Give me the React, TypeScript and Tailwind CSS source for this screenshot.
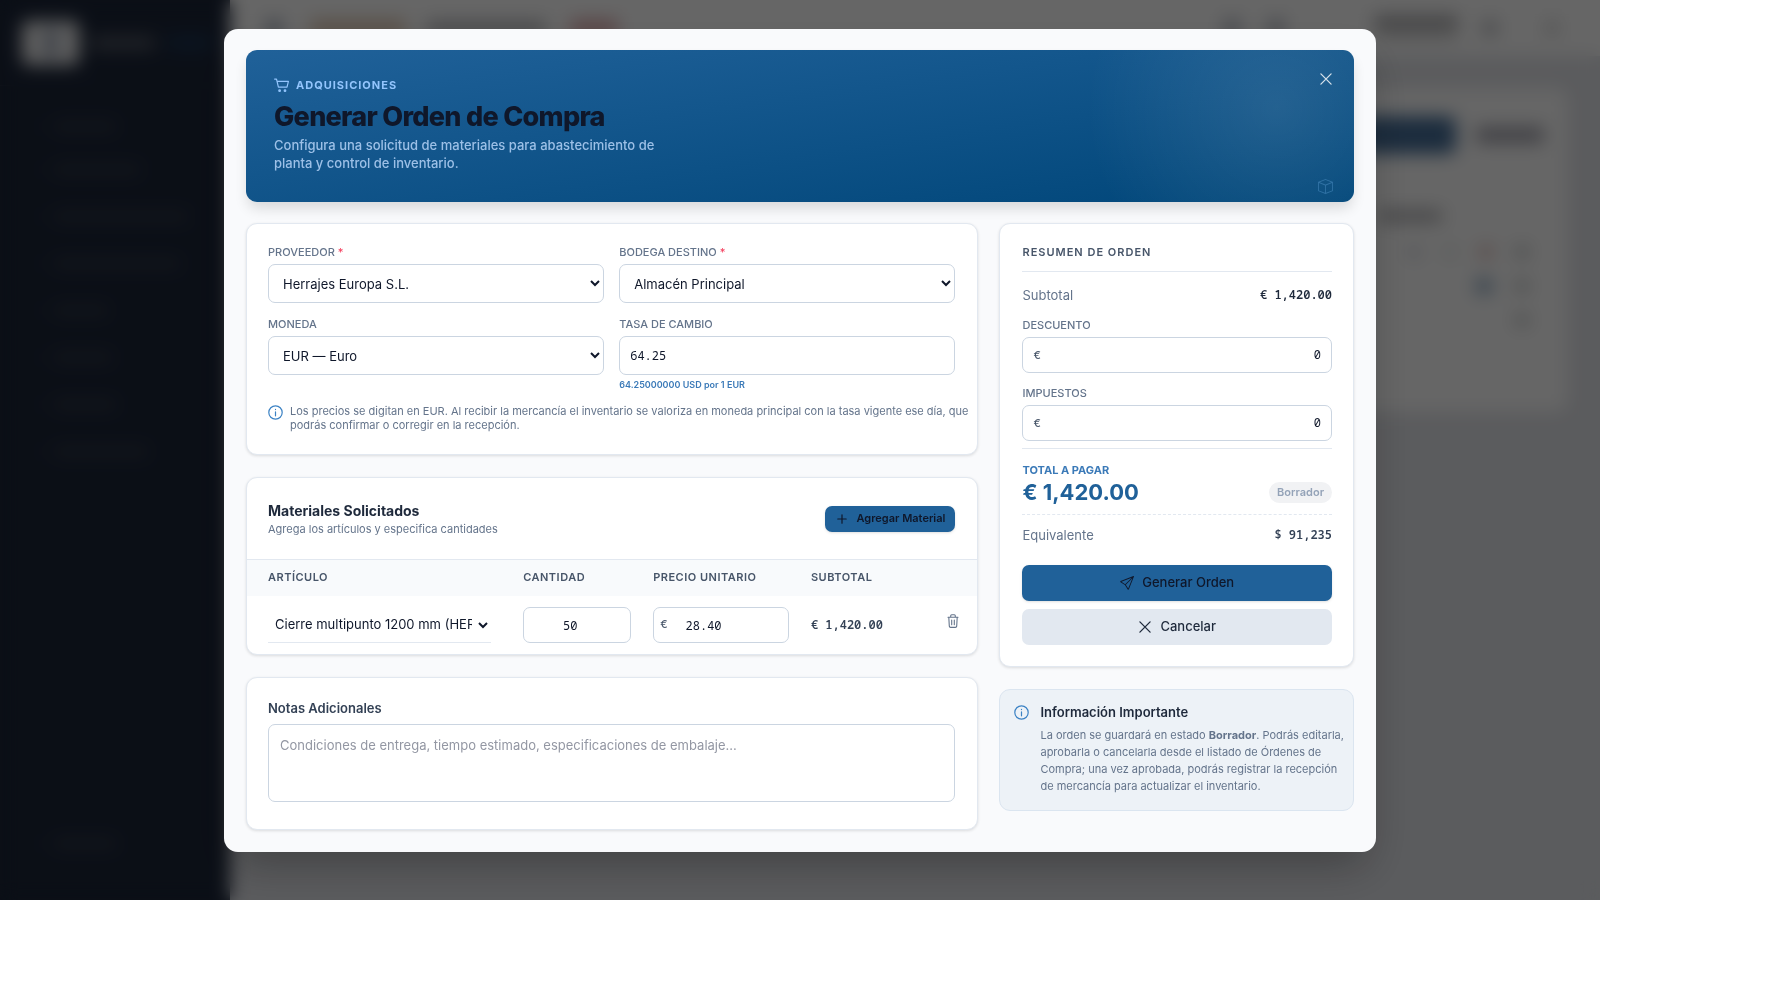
import type { ReactNode } from "react";
import { BsBox, BsSend } from "react-icons/bs";

const card = "rounded-[11px] border border-[#e2e8f0] bg-white shadow-[0_1px_3px_rgba(0,0,0,0.12)]";
const field =
  "w-full rounded-[7px] border border-[#cbd5e1] bg-white text-[13px] text-[#0f172a] outline-none";
const mono = "font-['Noto_Sans_Mono','Liberation_Mono',monospace]";
const label = "block text-[11px] leading-[14px] font-medium text-[#64748b] uppercase";

const stroke = { fill: "none", stroke: "currentColor", strokeWidth: 1.2, strokeLinecap: "round", strokeLinejoin: "round" } as const;

function CartIcon() {
  return (
    <svg viewBox="0 0 15 15" {...stroke} className="size-[15px]" aria-hidden="true">
      <path d="M.6 1.1h1.9l1.9 8.1h8.6l1.4-5.9H3.1" />
      <circle cx="5.6" cy="12.7" r=".8" fill="currentColor" />
      <circle cx="11" cy="12.7" r=".8" fill="currentColor" />
    </svg>
  );
}

function InfoIcon() {
  return (
    <svg viewBox="0 0 15 15" {...stroke} className="size-[15px] shrink-0" aria-hidden="true">
      <circle cx="7.5" cy="7.5" r="6.7" />
      <path d="M7.5 6.9v3.9M7.5 4.3v.3" />
    </svg>
  );
}

function CrossIcon() {
  return (
    <svg viewBox="0 0 14 14" {...stroke} strokeWidth={1.3} className="size-[14px]" aria-hidden="true">
      <path d="M1.9 1.9l10.2 10.2M12.1 1.9L1.9 12.1" />
    </svg>
  );
}

function PlusIcon() {
  return (
    <svg viewBox="0 0 14 14" {...stroke} className="size-[14px]" aria-hidden="true">
      <path d="M7 2.8v8.4M2.8 7h8.4" />
    </svg>
  );
}

function TrashIcon() {
  return (
    <svg viewBox="0 0 14 14" {...stroke} strokeWidth={1.1} className="size-[14px]" aria-hidden="true">
      <path d="M2 3.2h10M4.7 3.1V1.7q0-1 1-1h2.6q1 0 1 1v1.4M2.8 3.3l.5 8.8q.1 1.3 1.3 1.3h4.8q1.2 0 1.3-1.3l.5-8.8M5.7 6v4.8M8.3 6v4.8" />
    </svg>
  );
}

function Field({ id, text, required, children }: { id: string; text: string; required?: boolean; children: ReactNode }) {
  return (
    <div className="flex flex-col gap-[5px]">
      <label htmlFor={id} className={label}>
        {text} {required && <span className="text-[#f43f5e]">*</span>}
      </label>
      {children}
    </div>
  );
}

function Money({ id, text }: { id: string; text: string }) {
  return (
    <Field id={id} text={text}>
      <div className="flex h-9 items-center rounded-[7px] border border-[#cbd5e1] px-[10px]">
        <span className="text-[11px] font-medium text-[#475569]">€</span>
        <input id={id} defaultValue="0" className={`${mono} min-w-0 flex-1 bg-transparent text-right text-[12px] text-[#0f172a] outline-none`} />
      </div>
    </Field>
  );
}

const menu = ["w-16", "w-22", "w-34", "w-32", "w-14", "w-15", "w-16", "w-24"];

function Backdrop() {
  return (
    <div aria-hidden="true" className="flex h-full w-full bg-[#e3e5ea]">
      <div className="flex w-[230px] shrink-0 flex-col bg-[#1c2639]">
        <div className="flex h-[86px] items-center gap-3 border-b border-[#2a3243] pl-[22px]">
          <div className="flex h-[44px] w-[57px] items-center justify-center rounded-md bg-[#f0f0f0]">
            <div className="h-7 w-4 rounded bg-[#a2abbb]" />
          </div>
          <div className="h-3 w-16 rounded bg-[#5a5f6a]" />
          <div className="h-3 w-11 rounded bg-[#1d3859]" />
        </div>
        <div className="flex flex-col gap-[36px] pt-[35px] pl-[30px]">
          {menu.map((w, i) => (
            <div key={i} className="flex items-center gap-3 first:-mb-1">
              <div className="size-[11px] rounded bg-[#222b3c]" />
              <div className={`h-[11px] rounded bg-[#303847] ${w}`} />
            </div>
          ))}
        </div>
        <div className="mt-auto mb-[51px] ml-[30px] flex items-center gap-3">
          <div className="size-[11px] rounded bg-[#222b3c]" />
          <div className="h-[11px] w-16 rounded bg-[#303847]" />
        </div>
      </div>
      <div className="flex min-w-0 flex-1 flex-col">
        <div className="flex h-[56px] items-center bg-white pr-[42px] pl-9">
          <div className="size-4 rounded bg-[#9ba3b3]" />
          <div className="ml-7 h-4 w-24 rounded bg-[#dcc3ac]" />
          <div className="ml-5 h-3 w-30 rounded bg-[#a9a9ad]" />
          <div className="ml-6 h-4 w-12 rounded bg-[#dca5a7]" />
          <div className="ml-auto size-5 rounded-full bg-[#b6bac5]" />
          <div className="ml-6 size-5 rounded-full bg-[#b6bac5]" />
          <div className="ml-22 flex flex-col gap-1">
            <div className="h-3 w-21 rounded bg-[#a0a0a3]" />
            <div className="h-2 w-21 rounded bg-[#d0d0d0]" />
          </div>
          <div className="ml-6 size-4 rounded-full bg-[#b4b6bb]" />
          <div className="ml-12 size-3 rounded bg-[#c4c4c4]" />
        </div>
        <div className="mx-8 mt-8 flex h-[324px] flex-col items-end gap-6 rounded-xl bg-white px-6 pt-7">
          <div className="flex items-center gap-5">
            <div className="h-[38px] w-[140px] rounded-lg bg-[#466f9a]" />
            <div className="h-4 w-[68px] rounded bg-[#a2a2ad]" />
          </div>
          <div className="mt-8 mr-[102px] h-[12px] w-[64px] rounded bg-[#b0b0b3]" />
          <div className="flex items-center gap-6 pr-4">
            <div className="size-3 rounded bg-[#d0d2dc]" />
            <div className="size-3 rounded bg-[#e0e6e3]" />
            <div className="size-3 rounded bg-[#d9aea8]" />
            <div className="size-3 rounded bg-[#b5b8b8]" />
          </div>
          <div className="-mt-1 flex items-center gap-6 pr-4">
            <div className="size-4 rounded bg-[#8fabc5]" />
            <div className="size-3 rounded bg-[#b5b8b8]" />
          </div>
          <div className="-mt-1 mr-4 size-3 rounded bg-[#b5b8b8]" />
        </div>
      </div>
    </div>
  );
}

function Header() {
  return (
    <header className="relative flex justify-between overflow-hidden rounded-[11px] bg-[radial-gradient(circle_at_93%_38%,rgba(255,255,255,0.1),transparent_190px),linear-gradient(172deg,#206199,#004679)] px-7 pt-7 pb-[30px] shadow-[0_8px_14px_-2px_rgba(0,0,0,0.14)]">
      <div>
        <p className="flex h-[14px] items-center gap-[7px] text-[11px] font-bold tracking-[1px] text-[#93c5fd]">
          <CartIcon />
          ADQUISICIONES
        </p>
        <h1 className="mt-2 text-[27px] leading-[34px] font-extrabold tracking-[-0.7px] text-[#0f172a]">Generar Orden de Compra</h1>
        <p className="mt-[2px] w-[390px] text-[13px] leading-[18px] font-medium text-[#bfdbfe]/80">
          Configura una solicitud de materiales para abastecimiento de planta y control de inventario.
        </p>
      </div>
      <button type="button" aria-label="Cerrar" className="absolute top-[22px] right-[21px] text-white/80">
        <CrossIcon />
      </button>
      <BsBox className="absolute right-[21px] bottom-2 size-[15px] text-[#5fa0d6]/40" />
    </header>
  );
}

function GeneralCard() {
  return (
    <section className={`${card} pt-[21px] pr-[22px] pb-[22px] pl-[21px]`}>
      <div className="grid grid-cols-2 gap-x-[15px] gap-y-[14px]">
        <Field id="proveedor" text="Proveedor" required>
          <select id="proveedor" className={`${field} h-[39px] px-[10px]`}>
            <option>Herrajes Europa S.L.</option>
          </select>
        </Field>
        <Field id="bodega" text="Bodega Destino" required>
          <select id="bodega" className={`${field} h-[39px] px-[10px]`}>
            <option>Almacén Principal</option>
          </select>
        </Field>
        <Field id="moneda" text="Moneda">
          <select id="moneda" className={`${field} h-[39px] px-[10px]`}>
            <option>EUR — Euro</option>
          </select>
        </Field>
        <Field id="tasa" text="Tasa de Cambio">
          <div className={`${field} flex h-[39px] items-center px-[10px]`}>
            <input id="tasa" defaultValue="64.25" className={`${mono} w-full bg-transparent text-[12px] outline-none`} />
          </div>
          <p className="-mt-[2px] text-[9px] leading-[14px] font-semibold text-[#3b7ab8]">64.25000000 USD por 1 EUR</p>
        </Field>
      </div>
      <div className="mt-3 -mr-4 flex gap-[7px] text-[11px] leading-[14px] text-[#64748b]">
        <span className="mt-[1px] text-[#3b82c4]">
          <InfoIcon />
        </span>
        <p>
          Los precios se digitan en EUR. Al recibir la mercancía el inventario se valoriza en moneda principal con la tasa vigente ese
          día, que podrás confirmar o corregir en la recepción.
        </p>
      </div>
    </section>
  );
}

function MaterialsCard() {
  const th = "px-[11px] pb-[2px] text-left text-[11px] font-semibold tracking-[0.5px] text-[#475569]";
  return (
    <section className={`${card} overflow-hidden`}>
      <div className="flex h-[81px] items-center justify-between pr-[22px] pl-[21px]">
        <div>
          <h2 className="text-[14px] leading-5 font-bold text-[#1e293b]">Materiales Solicitados</h2>
          <p className="text-[11px] leading-4 text-[#64748b]">Agrega los artículos y especifica cantidades</p>
        </div>
        <button
          type="button"
          className="flex h-[26px] items-center gap-[7px] rounded-[7px] bg-[#206199] px-[10px] text-[11px] font-semibold text-[#0f172a] shadow-sm"
        >
          <PlusIcon />
          Agregar Material
        </button>
      </div>
      <table className="w-full table-fixed border-collapse border-t border-[#e2e8f0]">
        <colgroup>
          <col className="w-[36.3%]" />
          <col className="w-[17.8%]" />
          <col className="w-[21.6%]" />
          <col className="w-[16%]" />
          <col />
        </colgroup>
        <thead>
          <tr className="h-[36px] bg-[#f8fafc]">
            <th className={`${th} pl-[21px]`}>ARTÍCULO</th>
            <th className={th}>CANTIDAD</th>
            <th className={th}>PRECIO UNITARIO</th>
            <th className={th}>SUBTOTAL</th>
            <th aria-label="Acciones" />
          </tr>
        </thead>
        <tbody>
          <tr className="h-[58px]">
            <td className="pr-[21px] pl-[21px]">
              <select
                aria-label="Artículo"
                className="h-9 w-full border-b border-[#e2e8f0] bg-transparent px-[3px] text-[13px] text-[#0f172a] outline-none"
              >
                <option>Cierre multipunto 1200 mm (HER-CM1200)</option>
              </select>
            </td>
            <td className="px-[11px]">
              <input aria-label="Cantidad" defaultValue="50" className={`${field} ${mono} block h-9 pt-[2px] pr-[14px] text-center !text-[12px]`} />
            </td>
            <td className="px-[11px]">
              <div className={`${field} flex h-9 items-center gap-[18px] px-[6px]`}>
                <span className="text-[11px] font-medium text-[#475569]">€</span>
                <input
                  aria-label="Precio unitario"
                  defaultValue="28.40"
                  className={`${mono} min-w-0 flex-1 bg-transparent pt-[2px] text-[12px] outline-none`}
                />
              </div>
            </td>
            <td className={`${mono} px-[11px] text-[12px] font-semibold whitespace-nowrap text-[#334155]`}>€ 1,420.00</td>
            <td className="pt-[14px] pr-[17px] text-right align-top">
              <button type="button" aria-label="Eliminar" className="text-[#64748b]">
                <TrashIcon />
              </button>
            </td>
          </tr>
        </tbody>
      </table>
    </section>
  );
}

function SummaryCard() {
  return (
    <section className={`${card} pt-[21px] pr-[21px] pb-[21px] pl-[22px]`}>
      <h2 className="border-b border-[#e2e8f0] pb-3 text-[11px] leading-[14px] font-semibold tracking-[1px] text-[#475569]">
        RESUMEN DE ORDEN
      </h2>
      <div className="mt-[14px] mb-[14px] flex items-center justify-between text-[13px] leading-[18px] text-[#64748b]">
        <span>Subtotal</span>
        <span className={`${mono} text-[12px] font-semibold text-[#1e293b]`}>€ 1,420.00</span>
      </div>
      <div className="flex flex-col gap-[13px]">
        <Money id="descuento" text="Descuento" />
        <Money id="impuestos" text="Impuestos" />
      </div>
      <div className="mt-[7px] border-t border-[#e2e8f0] pt-[14px]">
        <p className="text-[11px] leading-[14px] font-bold text-[#3b7ab8]">TOTAL A PAGAR</p>
        <div className="flex items-center justify-between">
          <strong className="text-[22px] leading-[30px] font-bold text-[#206199]">€ 1,420.00</strong>
          <span className="rounded-full bg-[#f1f2f4] px-2 text-[11px] leading-[21px] font-semibold text-[#94a3b8]">Borrador</span>
        </div>
      </div>
      <div className="mt-[7px] flex items-center justify-between border-t border-dashed border-[#e2e8f0] pt-[11px] text-[13px] leading-[18px] text-[#64748b]">
        <span>Equivalente</span>
        <span className={`${mono} text-[12px] font-semibold text-[#334155]`}>$ 91,235</span>
      </div>
      <div className="mt-[21px] flex flex-col gap-2 text-[13px]">
        <button
          type="button"
          className="flex h-9 items-center justify-center gap-2 rounded-[7px] bg-[#206199] font-medium text-[#0f172a] shadow-sm"
        >
          <BsSend className="size-[14px]" />
          Generar Orden
        </button>
        <button type="button" className="flex h-9 items-center justify-center gap-2 rounded-[7px] bg-[#e2e8f0] font-medium text-[#1e293b]">
          <CrossIcon />
          Cancelar
        </button>
      </div>
    </section>
  );
}

export default function App() {
  return (
    <div className="relative mr-[177px] h-[90vh] overflow-hidden font-['Inter',sans-serif]">
      <Backdrop />
      <div className="absolute inset-0 flex items-start justify-center bg-black/60 pt-[29px] backdrop-blur-[9px]">
        <div
          role="dialog"
          aria-modal="true"
          aria-label="Generar Orden de Compra"
          className="w-[72%] rounded-[14px] bg-[#f9fafc] p-[22px] pt-[21px] shadow-[0_22px_45px_-10px_rgba(0,0,0,0.3)]"
        >
          <Header />
          <div className="mt-[21px] flex items-start gap-[21px]">
            <div className="flex min-w-0 flex-1 flex-col gap-[22px]">
              <GeneralCard />
              <MaterialsCard />
              <section className={`${card} pt-[21px] pr-[22px] pb-[27px] pl-[21px]`}>
                <label htmlFor="notas" className="block text-[13px] leading-[18px] font-semibold text-[#334155]">
                  Notas Adicionales
                </label>
                <textarea
                  id="notas"
                  placeholder="Condiciones de entrega, tiempo estimado, especificaciones de embalaje..."
                  className={`${field} mt-[7px] block h-[78px] resize-none px-[11px] py-[11px] leading-[18px] placeholder:text-[#9397a3]`}
                />
              </section>
            </div>
            <div className="flex w-[32%] shrink-0 flex-col gap-[22px]">
              <SummaryCard />
              <aside className="flex gap-[11px] rounded-[11px] border border-[#dbe5f0] bg-[#edf2f7] pt-[13px] pr-1 pb-[15px] pl-[14px]">
                <span className="mt-[2px] text-[#3b82c4]">
                  <InfoIcon />
                </span>
                <div>
                  <h3 className="text-[13px] leading-[18px] font-semibold text-[#1e293b]">Información Importante</h3>
                  <p className="mt-[6px] text-[11px] leading-[17px] text-[#64748b]">
                    La orden se guardará en estado <strong className="font-bold">Borrador</strong>. Podrás editarla, aprobarla o cancelarla
                    desde el listado de Órdenes de Compra; una vez aprobada, podrás registrar la recepción de mercancía para actualizar el
                    inventario.
                  </p>
                </div>
              </aside>
            </div>
          </div>
        </div>
      </div>
    </div>
  );
}
